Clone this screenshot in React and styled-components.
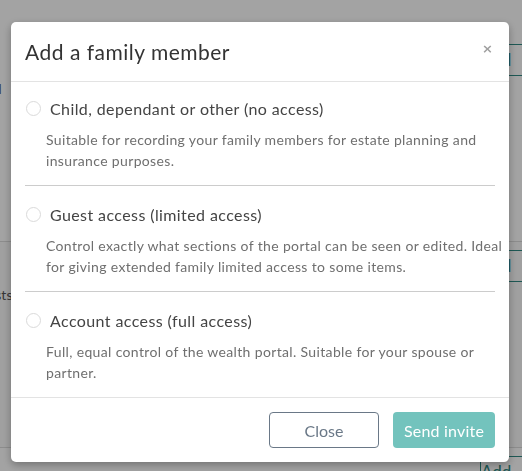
import React from "react";
import styled, { createGlobalStyle } from "styled-components";

const GlobalStyle = createGlobalStyle`
  html, body {
    margin: 0;
    padding: 0;
    background: #ffffff;
    font-family: "Lato", "Open Sans", sans-serif;
    overflow: hidden;
  }
  * { box-sizing: border-box; }
`;

const options = [
  {
    title: "Child, dependant or other (no access)",
    text: "Suitable for recording your family members for estate planning and insurance purposes.",
  },
  {
    title: "Guest access (limited access)",
    text: "Control exactly what sections of the portal can be seen or edited. Ideal for giving extended family limited access to some items.",
  },
  {
    title: "Account access (full access)",
    text: "Full, equal control of the wealth portal. Suitable for your spouse or partner.",
  },
];

const pageRows = [
  { note: "Child", alt: false },
  { note: "Guests,", alt: true },
  { note: "Account", alt: false },
];

const App = () => {
  return (
    <>
      <GlobalStyle />
      <Page>
        {pageRows.map((r) => (
          <PageRow key={r.note} alt={r.alt}>
            <RowText>{r.note}</RowText>
            <AddBtn>Add</AddBtn>
          </PageRow>
        ))}
      </Page>

      <Overlay>
        <Modal>
          <ModalHeader>
            <h3>Add a family member</h3>
            <CloseX aria-label="close">×</CloseX>
          </ModalHeader>
          <ModalBody>
            {options.map((o) => (
              <Option key={o.title}>
                <OptionLabel>
                  <Radio />
                  <span>{o.title}</span>
                </OptionLabel>
                <OptionText>{o.text}</OptionText>
              </Option>
            ))}
          </ModalBody>
          <ModalFooter>
            <GhostButton>Close</GhostButton>
            <PrimaryButton>Send invite</PrimaryButton>
          </ModalFooter>
        </Modal>
      </Overlay>
    </>
  );
};

export default App;

const Page = styled.div`
  width: 560px;
  margin-left: -30px;
  padding-top: 36px;
`;

const PageRow = styled.div`
  height: 206px;
  display: flex;
  align-items: flex-start;
  justify-content: space-between;
  padding: 8px 0 0 0;
  border-bottom: 1px solid #dcdcdc;
  background: ${(p) => (p.alt ? "#fafafa" : "#ffffff")};
`;

const RowText = styled.div`
  padding-top: 36px;
  font-size: 14px;
  color: #555;
`;

const AddBtn = styled.div`
  width: 80px;
  height: 32px;
  margin-right: -30px;
  border: 1px solid #2f8a84;
  border-right: none;
  color: #2f8a84;
  font-size: 17px;
  line-height: 30px;
  padding-left: 0;
`;

const Overlay = styled.div`
  position: fixed;
  inset: 0;
  background: rgba(0, 0, 0, 0.36);
  padding: 22px 13px 0 11px;
`;

const Modal = styled.div`
  width: 498px;
  background: #ffffff;
  border-radius: 5px;
  box-shadow: 0 3px 9px rgba(0, 0, 0, 0.3);
  overflow: hidden;
`;

const ModalHeader = styled.div`
  height: 60px;
  display: flex;
  align-items: center;
  padding: 0 16px 0 14px;
  border-bottom: 1px solid #e3e3e3;

  h3 {
    flex: auto;
    margin: 0;
    font-size: 21px;
    font-weight: 400;
    color: #333;
    letter-spacing: 0.5px;
  }
`;

const CloseX = styled.span`
  font-size: 13px;
  font-weight: 700;
  line-height: 1;
  color: #a0a0a0;
  font-family: "DejaVu Sans", sans-serif;
  margin-top: -6px;
`;

const ModalBody = styled.div`
  padding: 0 14px;
`;

const Option = styled.div`
  padding: 18px 0 14px;
  border-bottom: 1px solid #cccccc;

  &:first-child {
    padding-top: 16px;
  }
  &:last-child {
    border-bottom: none;
  }
`;

const OptionLabel = styled.label`
  display: flex;
  align-items: center;
  gap: 9px;
  height: 20px;
  padding-left: 1px;
  font-size: 16px;
  color: #444;
  letter-spacing: 0.4px;
`;

const Radio = styled.span`
  width: 15px;
  height: 15px;
  border-radius: 50%;
  border: 1px solid #dadada;
  background: #fff;
  flex: none;
`;

const OptionText = styled.p`
  margin: 11px -8px 0 0;
  padding-left: 21px;
  font-size: 14px;
  line-height: 21px;
  color: #6f6f6f;
  letter-spacing: 0.35px;
`;

const ModalFooter = styled.div`
  display: flex;
  justify-content: flex-end;
  gap: 14px;
  padding: 14px;
  border-top: 1px solid #e3e3e3;
`;

const GhostButton = styled.button`
  width: 110px;
  height: 36px;
  border: 1px solid #6a7887;
  border-radius: 4px;
  background: #fff;
  color: #6a7887;
  font-family: inherit;
  font-size: 16px;
`;

const PrimaryButton = styled.button`
  width: 102px;
  height: 36px;
  border: none;
  border-radius: 4px;
  background: #73c3bd;
  color: #fff;
  font-family: inherit;
  font-size: 16px;
  letter-spacing: 0.2px;
`;
